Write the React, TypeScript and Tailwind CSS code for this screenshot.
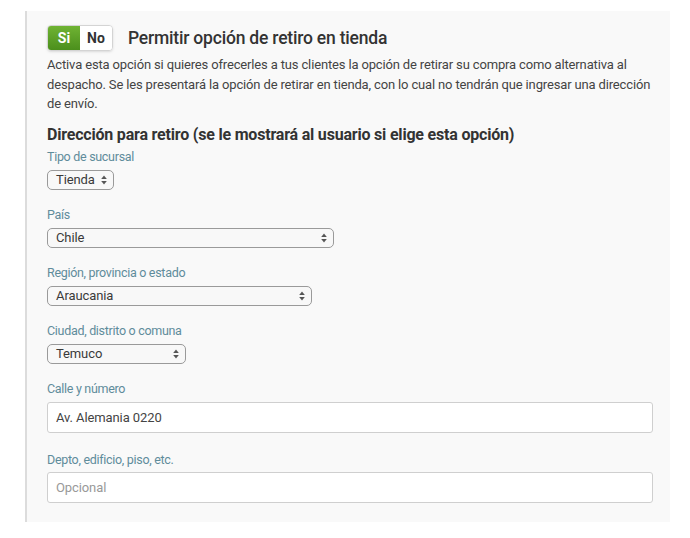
import React from 'react';

const font = { fontFamily: 'Roboto, "Liberation Sans", sans-serif' };

const Arrows = () => (
  <svg width="6" height="10" viewBox="0 0 6 10" className="shrink-0">
    <path d="M3 0.5 L5.8 4 L0.2 4 Z" fill="#555" />
    <path d="M3 9.5 L5.8 6 L0.2 6 Z" fill="#555" />
  </svg>
);

const Select = ({ value, width }: { value: string; width: string }) => (
  <div
    className={`${width} h-[20px] flex items-center justify-between rounded-[5px] border border-[#9a9a9a] bg-[#f8f8f8] pl-[8px] pr-[6px] text-[13px] leading-none tracking-[-0.1px] text-[#3a3a3a]`}
  >
    <span>{value}</span>
    <Arrows />
  </div>
);

const Label = ({ children }: { children: React.ReactNode }) => (
  <div className="text-[12.5px] leading-[18px] tracking-[-0.3px] text-[#5f8c9b]">{children}</div>
);

const App = () => {
  return (
    <div className="w-[690px] h-[538px] bg-white pt-[11px] pl-[25px]" style={font}>
      <div className="w-[645px] h-[511px] border-l-2 border-[#dcdcdc] bg-[#f9f9f9] pl-[20px] pr-[17px] pt-[14px]">
        <div className="flex items-center h-[26px]">
          <div className="flex w-[66px] h-[26px] rounded-[4px] overflow-hidden border border-[#d4d4d4] shadow-sm">
            <div className="w-[32px] flex items-center justify-center bg-gradient-to-b from-[#6fb333] to-[#4b8f1c] text-white font-bold text-[14px]">
              Si
            </div>
            <div className="flex-1 flex items-center justify-center bg-white text-[#333] font-bold text-[14px]">
              No
            </div>
          </div>
          <h2 className="ml-[15px] text-[17.5px] tracking-[-0.2px] text-[#333] font-medium">
            Permitir opción de retiro en tienda
          </h2>
        </div>

        <p className="mt-[4px] text-[13px] leading-[19.5px] tracking-[-0.15px] text-[#444]">
          Activa esta opción si quieres ofrecerles a tus clientes la opción de retirar su compra como alternativa al
          despacho. Se les presentará la opción de retirar en tienda, con lo cual no tendrán que ingresar una dirección
          de envío.
        </p>

        <h3 className="mt-[11px] text-[16px] leading-[20px] tracking-[-0.2px] font-bold text-[#333]">
          Dirección para retiro (se le mostrará al usuario si elige esta opción)
        </h3>

        <div className="mt-[3px]">
          <Label>Tipo de sucursal</Label>
          <div className="mt-[4px]">
            <Select value="Tienda" width="w-[67px]" />
          </div>
        </div>

        <div className="mt-[16px]">
          <Label>País</Label>
          <div className="mt-[4px]">
            <Select value="Chile" width="w-[287px]" />
          </div>
        </div>

        <div className="mt-[16px]">
          <Label>Región, provincia o estado</Label>
          <div className="mt-[4px]">
            <Select value="Araucania" width="w-[265px]" />
          </div>
        </div>

        <div className="mt-[16px]">
          <Label>Ciudad, distrito o comuna</Label>
          <div className="mt-[4px]">
            <Select value="Temuco" width="w-[139px]" />
          </div>
        </div>

        <div className="mt-[16px]">
          <Label>Calle y número</Label>
          <input
            readOnly
            value="Av. Alemania 0220"
            className="mt-[4px] block w-full h-[31px] rounded-[3px] border border-[#cfcfcf] bg-white px-[8px] text-[13px] tracking-[-0.1px] text-[#444] outline-none"
          />
        </div>

        <div className="mt-[18px]">
          <Label>Depto, edificio, piso, etc.</Label>
          <input
            readOnly
            placeholder="Opcional"
            className="mt-[3px] block w-full h-[31px] rounded-[3px] border border-[#cfcfcf] bg-white px-[8px] text-[13px] tracking-[-0.1px] text-[#444] placeholder:text-[#999] outline-none"
          />
        </div>
      </div>
    </div>
  );
};

export default App;
